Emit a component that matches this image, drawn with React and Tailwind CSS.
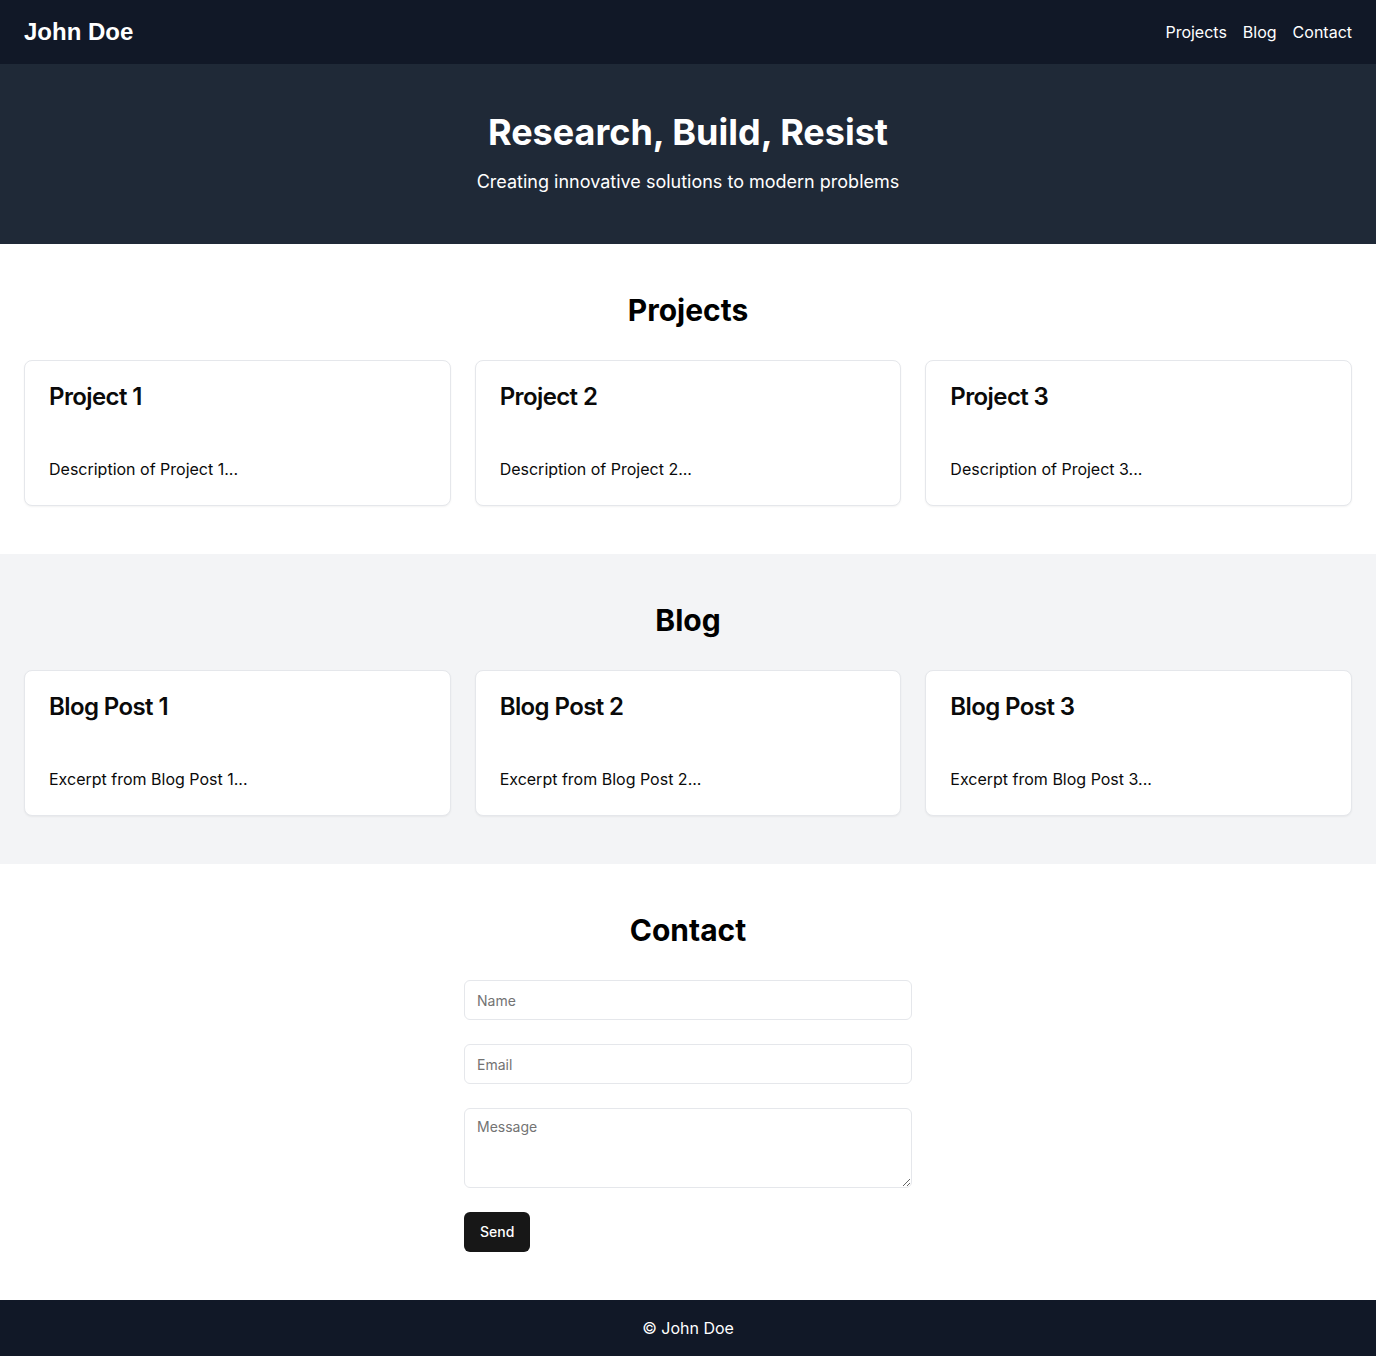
import React from 'react';

const projects = [1, 2, 3].map((n) => ({
  id: n,
  title: `Project ${n}`,
  text: `Description of Project ${n}...`,
}));

const posts = [1, 2, 3].map((n) => ({
  id: n,
  title: `Blog Post ${n}`,
  text: `Excerpt from Blog Post ${n}...`,
}));

function Card({ title, text }) {
  return (
    <div className="rounded-lg border border-[#e5e7eb] bg-white text-[#0a0a0a] shadow-xs">
      <div className="p-6">
        <h3 className="text-2xl font-semibold leading-none tracking-tight">{title}</h3>
      </div>
      <div className="p-6">
        <p className="text-base leading-6">{text}</p>
      </div>
    </div>
  );
}

function Section({ title, items, className }) {
  return (
    <section className={`px-6 py-12 ${className}`}>
      <h2 className="mb-8 text-center text-3xl font-bold text-black">{title}</h2>
      <div className="grid grid-cols-3 gap-6">
        {items.map((item) => (
          <Card key={item.id} title={item.title} text={item.text} />
        ))}
      </div>
    </section>
  );
}

export default function App() {
  return (
    <div className="min-h-screen bg-white font-['Inter',sans-serif]">
      <header className="flex h-16 items-center justify-between bg-[#111827] px-6">
        <div className="font-['Liberation_Sans',Arial,sans-serif] text-2xl font-bold text-white">
          John Doe
        </div>
        <nav className="flex gap-4 text-base text-white">
          <a href="#projects">Projects</a>
          <a href="#blog">Blog</a>
          <a href="#contact">Contact</a>
        </nav>
      </header>

      <section className="bg-[#1f2937] py-12 text-center text-white">
        <h1 className="mb-4 text-4xl font-bold">Research, Build, Resist</h1>
        <p className="text-lg">Creating innovative solutions to modern problems</p>
      </section>

      <Section title="Projects" items={projects} className="bg-white" />
      <Section title="Blog" items={posts} className="bg-[#f3f4f6]" />

      <section className="px-6 py-12">
        <h2 className="mb-8 text-center text-3xl font-bold text-black">Contact</h2>
        <form className="mx-auto flex max-w-md flex-col gap-6" onSubmit={(e) => e.preventDefault()}>
          <input
            type="text"
            placeholder="Name"
            className="h-10 w-full rounded-md border border-[#e5e7eb] bg-white px-3 py-2 text-sm placeholder:text-[#737373]"
          />
          <input
            type="email"
            placeholder="Email"
            className="h-10 w-full rounded-md border border-[#e5e7eb] bg-white px-3 py-2 text-sm placeholder:text-[#737373]"
          />
          <textarea
            placeholder="Message"
            className="block min-h-[80px] h-20 w-full rounded-md border border-[#e5e7eb] bg-white px-3 py-2 text-sm placeholder:text-[#737373]"
          />
          <div>
            <button
              type="submit"
              className="h-10 rounded-md bg-[#171717] px-4 text-sm font-medium text-white"
            >
              Send
            </button>
          </div>
        </form>
      </section>

      <footer className="bg-[#111827] py-4 text-center text-base text-white">
        © John Doe
      </footer>
    </div>
  );
}
